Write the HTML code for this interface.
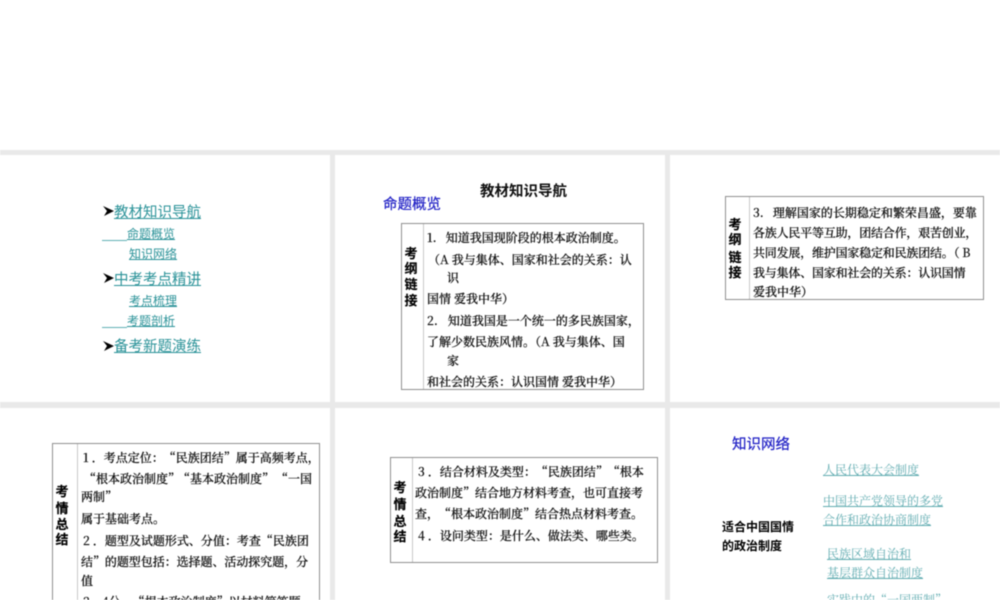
<!DOCTYPE html>
<html lang="zh-CN"><head><meta charset="utf-8"><title>教材知识导航</title>
<style>
html,body{margin:0;padding:0;background:#fff}
#p{position:relative;width:1000px;height:600px;overflow:hidden;background:#fff;filter:blur(.4px)}
.g{position:absolute;background:#e9e9e9}
.b{position:absolute;border:1px solid #8f8f8f;box-sizing:border-box;background:#fff}
.d{position:absolute;width:1px;background:#c8c8c8}
.t{position:absolute;white-space:pre;line-height:1;font-size:12px;color:#111;font-family:"Noto Serif CJK SC",serif;font-weight:500;-webkit-text-stroke:.2px #111;transform:translateY(1px)}
.s{font-family:"Noto Sans CJK SC",sans-serif;font-weight:400;-webkit-text-stroke:0}
.k{font-family:"Noto Sans CJK SC",sans-serif;font-weight:700;font-size:13px;color:#000;-webkit-text-stroke:.15px #000;margin-left:-.5px}
.l{color:#2a9298;text-decoration:underline;text-underline-offset:1px;font-family:"Noto Sans CJK SC",sans-serif;font-weight:400;-webkit-text-stroke:0}
.h{font-size:14.5px}
.bl{color:#1c1cc4;-webkit-text-stroke:.2px #1c1cc4}
.n{font-family:"Noto Serif CJK SC",serif;color:#5fabb0;text-decoration:underline;text-underline-offset:1px;font-weight:400;-webkit-text-stroke:0}
.u{position:absolute;height:1px;background:#5fb0b4}
svg{position:absolute}
</style></head><body><div id="p">
<div class="g" style="left:0;top:150px;width:1000px;height:5px"></div>
<div class="g" style="left:0;top:402px;width:1000px;height:6px"></div>
<div class="g" style="left:330px;top:150px;width:5px;height:450px"></div>
<div class="g" style="left:665px;top:150px;width:5px;height:450px"></div>

<svg style="left:103px;top:205px" width="11" height="12" viewBox="0 0 11 12"><path d="M0 1 L11 6 L1 11 L4 6 Z" fill="#000"/></svg>
<svg style="left:103px;top:272px" width="11" height="12" viewBox="0 0 11 12"><path d="M0 1 L11 6 L1 11 L4 6 Z" fill="#000"/></svg>
<svg style="left:103px;top:340px" width="11" height="12" viewBox="0 0 11 12"><path d="M0 1 L11 6 L1 11 L4 6 Z" fill="#000"/></svg>
<div class="t l h" style="left:114px;top:204px">教材知识导航</div>
<div class="u" style="left:102px;top:240px;width:25px"></div>
<div class="t l" style="left:127px;top:227px">命题概览</div>
<div class="t l" style="left:129px;top:247px">知识网络</div>
<div class="t l h" style="left:114px;top:271px">中考考点精讲</div>
<div class="t l" style="left:129px;top:294px">考点梳理</div>
<div class="u" style="left:102px;top:327px;width:25px"></div>
<div class="t l" style="left:127px;top:314px">考题剖析</div>
<div class="t l h" style="left:114px;top:338px">备考新题演练</div>

<div class="t s h" style="left:480px;top:183px;font-weight:700;color:#111">教材知识导航</div>
<div class="t s h bl" style="left:383px;top:196px">命题概览</div>
<div class="b" style="left:401px;top:223px;width:243px;height:167px"></div>
<div class="d" style="left:423px;top:224px;height:165px"></div>
<div class="t k" style="left:405px;top:245px">考</div>
<div class="t k" style="left:405px;top:260px">纲</div>
<div class="t k" style="left:405px;top:276px">链</div>
<div class="t k" style="left:405px;top:292px">接</div>
<div class="t" style="left:427px;top:231px">1.  <span style="margin-left:3px">知道我国现阶段的根本政治制度。</span></div>
<div class="t" style="left:428px;top:253px">（A 我与集体、国家和社会的关系：认</div>
<div class="t" style="left:447px;top:271px">识</div>
<div class="t" style="left:427px;top:292px">国情 爱我中华）</div>
<div class="t" style="left:427px;top:314px">2.  <span style="margin-left:4px">知道我国是一个统一的多民族国家，</span></div>
<div class="t" style="left:427px;top:335px">了解少数民族风情。（A 我与集体、国</div>
<div class="t" style="left:447px;top:354px">家</div>
<div class="t" style="left:427px;top:375px">和社会的关系：认识国情 爱我中华）</div>

<div class="b" style="left:725px;top:196px;width:259px;height:104px"></div>
<div class="d" style="left:749px;top:197px;height:102px"></div>
<div class="t k" style="left:729px;top:216px">考</div>
<div class="t k" style="left:729px;top:231px">纲</div>
<div class="t k" style="left:729px;top:249px">链</div>
<div class="t k" style="left:729px;top:264px">接</div>
<div class="t" style="left:753px;top:206px">3.  <span style="margin-left:3px">理解国家的长期稳定和繁荣昌盛，要靠</span></div>
<div class="t" style="left:753px;top:226px;letter-spacing:-.2px">各族人民平等互助，团结合作，艰苦创业，</div>
<div class="t" style="left:753px;top:246px;letter-spacing:-.2px">共同发展，维护国家稳定和民族团结。（ B</div>
<div class="t" style="left:753px;top:266px;letter-spacing:-.2px">我与集体、国家和社会的关系：认识国情</div>
<div class="t" style="left:753px;top:285px">爱我中华）</div>

<div class="b" style="left:52px;top:443px;width:268px;height:170px"></div>
<div class="d" style="left:77px;top:444px;height:156px"></div>
<div class="t k" style="left:56px;top:483px">考</div>
<div class="t k" style="left:56px;top:500px">情</div>
<div class="t k" style="left:56px;top:516px">总</div>
<div class="t k" style="left:56px;top:531px">结</div>
<div class="t" style="left:83px;top:451px">1 ．<span>考点定位：“民族团结”属于高频考点，</span></div>
<div class="t" style="left:84px;top:472px">“根本政治制度”</div>
<div class="t" style="left:178px;top:472px">“基本政治制度”</div>
<div class="t" style="left:276px;top:472px">“一国</div>
<div class="t" style="left:81px;top:490px">两制”</div>
<div class="t" style="left:81px;top:512px">属于基础考点。</div>
<div class="t" style="left:83px;top:534px">2 ．<span>题型及试题形式、分值：考查“民族团</span></div>
<div class="t" style="left:81px;top:555px;letter-spacing:-.05px">结”的题型包括：选择题、活动探究题，分</div>
<div class="t" style="left:81px;top:574px">值</div>
<div class="t" style="left:83px;top:595px">2～4分。“根本政治制度”以材料简答题</div>

<div class="b" style="left:390px;top:457px;width:268px;height:106px"></div>
<div class="d" style="left:412px;top:458px;height:104px"></div>
<div class="t k" style="left:394px;top:479px">考</div>
<div class="t k" style="left:394px;top:496px">情</div>
<div class="t k" style="left:394px;top:513px">总</div>
<div class="t k" style="left:394px;top:528px">结</div>
<div class="t" style="left:418px;top:465px">3 ．<span>结合材料及类型：“民族团结”“根本</span></div>
<div class="t" style="left:415px;top:486px">政治制度”结合地方材料考查，也可直接考</div>
<div class="t" style="left:415px;top:507px">查，“根本政治制度”结合热点材料考查。</div>
<div class="t" style="left:418px;top:529px">4 ．<span>设问类型：是什么、做法类、哪些类。</span></div>

<div class="t s h bl" style="left:732px;top:436px">知识网络</div>
<div class="t n" style="left:823px;top:463px">人民代表大会制度</div>
<div class="t n" style="left:823px;top:494px">中国共产党领导的多党</div>
<div class="t n" style="left:823px;top:513px">合作和政治协商制度</div>
<div class="t n" style="left:827px;top:547px">民族区域自治和</div>
<div class="t n" style="left:827px;top:566px">基层群众自治制度</div>
<div class="t n" style="left:827px;top:593px">实践中的“一国两制”</div>
<div class="t s" style="left:722px;top:520px;font-weight:700;color:#000">适合中国国情</div>
<div class="t s" style="left:722px;top:539px;font-weight:700;color:#000">的政治制度</div>
</div></body></html>
